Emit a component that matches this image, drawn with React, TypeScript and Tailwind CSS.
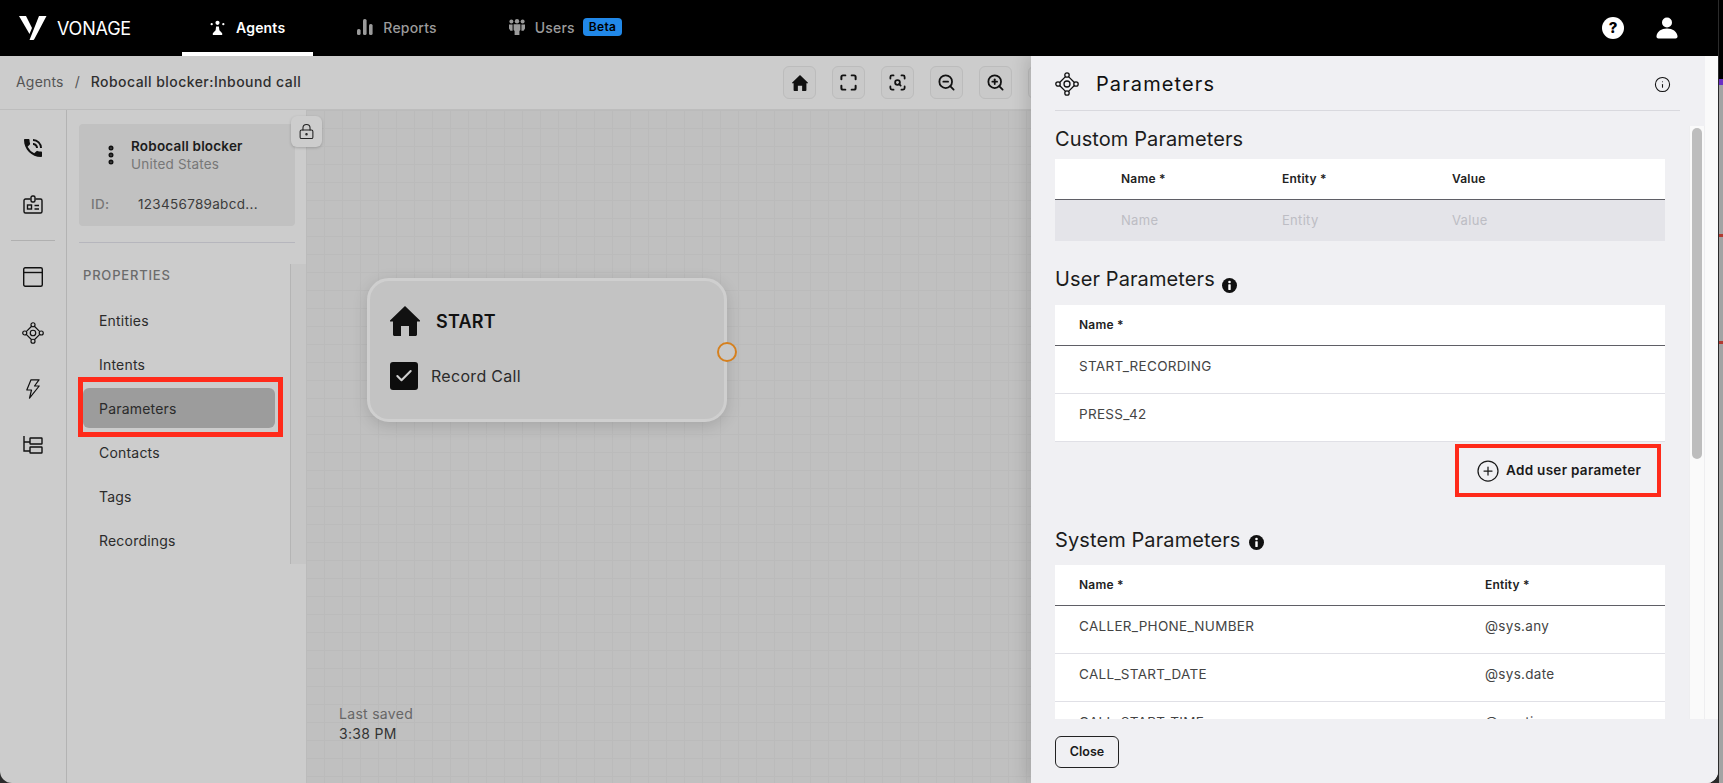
import { CirclePlus, EllipsisVertical, Info, LockKeyhole, Maximize, ScanSearch, ZoomIn, ZoomOut, Check } from 'lucide-react';
import { MdPhoneInTalk } from 'react-icons/md';

function VonageLogo() {
  return (
    <svg viewBox="0 0 28 24" className="h-6 w-7" fill="currentColor">
      <path d="M0 0h7l6 12-2.500 6z" />
      <path d="M20 0h7.500L15.500 22.800c-.4.800-.9 1.200-1.800 1.200H10.500z" />
    </svg>
  );
}

function AgentsIcon() {
  return (
    <svg viewBox="0 0 16 16" className="h-[15px] w-[15px]" fill="currentColor">
      <circle cx="1.8" cy="4.5" r="1.2" />
      <circle cx="8" cy="3" r="2.2" />
      <circle cx="14.2" cy="4.5" r="1.2" />
      <path d="M6.5 7h3l.5 4 3 3v2H3v-2l3-3z" />
    </svg>
  );
}

function ReportsIcon() {
  return (
    <svg viewBox="0 0 16 16" className="h-4 w-4" fill="currentColor">
      <rect x="0" y="10" width="3.6" height="6" rx="1.6" />
      <rect x="6" y="0" width="3.6" height="16" rx="1.6" />
      <rect x="12" y="5" width="3.6" height="11" rx="1.6" />
    </svg>
  );
}

function UsersIcon() {
  return (
    <svg viewBox="0 0 16 16" className="h-4 w-4" fill="currentColor">
      <circle cx="2.400" cy="2.600" r="2" />
      <circle cx="8" cy="2.200" r="2.200" />
      <circle cx="13.600" cy="2.600" r="2" />
      <path d="M0 5.400h3.600v6.400H1.400L0 9.400zM12.400 5.400H16v4l-1.400 2.400h-2.200zM4.600 5.200h6.800v5.800l-1 1V16H5.600v-4l-1-1z" />
    </svg>
  );
}

function PersonIcon() {
  return (
    <svg viewBox="0 0 22 22" className="h-[22px] w-[22px]" fill="currentColor">
      <circle cx="11" cy="5.5" r="5" />
      <path d="M11 11.5c5.5 0 10 3 10.5 7.5.2 1.5-.5 2.5-2 2.5h-17c-1.5 0-2.200-1-2-2.500C1 14.500 5.500 11.500 11 11.500z" />
    </svg>
  );
}

function HomeIcon({ className }: { className: string }) {
  return (
    <svg viewBox="0 0 30 30" className={className} fill="currentColor">
      <path d="M15 0 30 14.500c.3.500 0 1-.5 1H27V28.500c0 .8-.7 1.500-1.500 1.500H19V20h-8v10H4.500C3.700 30 3 29.300 3 28.500V15.500H.5c-.5 0-.8-.5-.5-1z" />
    </svg>
  );
}

function ParamsIcon({ className }: { className: string }) {
  return (
    <svg viewBox="0 0 24 24" className={className} fill="none" stroke="currentColor" strokeWidth="1.300">
      <circle cx="12" cy="12" r="3" />
      <circle cx="12" cy="3" r="2.200" />
      <circle cx="12" cy="21" r="2.200" />
      <circle cx="3" cy="12" r="2.200" />
      <circle cx="21" cy="12" r="2.200" />
      <path d="M10.500 4.600 4.600 10.500M13.500 4.600l5.900 5.900M4.600 13.500l5.900 5.900M19.400 13.500l-5.900 5.900" />
    </svg>
  );
}

function BadgeIcon() {
  return (
    <svg viewBox="0 0 20 20" className="h-5 w-5" fill="none" stroke="currentColor" strokeWidth="1.400">
      <path d="M7.500 4H2.500a1.500 1.500 0 0 0-1.500 1.500v11A1.500 1.500 0 0 0 2.500 18h15a1.500 1.500 0 0 0 1.500-1.500v-11A1.500 1.500 0 0 0 17.500 4h-5" />
      <rect x="8" y="1" width="4" height="6" rx="1.500" />
      <rect x="4.500" y="10" width="4" height="4" />
      <path d="M11.500 10.500h4.500M11.500 14h4.500" />
    </svg>
  );
}

function LayoutIcon() {
  return (
    <svg viewBox="0 0 20 20" className="h-5 w-5" fill="none" stroke="currentColor" strokeWidth="1.400">
      <rect x="0.700" y="0.700" width="18.600" height="18.600" rx="1.500" />
      <path d="M1 5.500h18" />
    </svg>
  );
}

function BoltIcon() {
  return (
    <svg viewBox="0 0 14 20" className="h-5 w-[14px]" fill="none" stroke="currentColor" strokeWidth="1.200" strokeLinejoin="round">
      <path d="M5 0.800 0.800 11H5.500L3.500 19.200 13.200 7H8.500L13 0.800z" />
    </svg>
  );
}

function TreeIcon() {
  return (
    <svg viewBox="0 0 20 20" className="h-5 w-5" fill="none" stroke="currentColor" strokeWidth="1.400">
      <path d="M1 1v15h6M1 7h6" />
      <rect x="7" y="3" width="12" height="6" rx="0.500" />
      <rect x="7" y="12" width="12" height="6" rx="0.500" />
    </svg>
  );
}

function SolidInfo() {
  return (
    <svg viewBox="0 0 16 16" className="h-[15px] w-[15px] shrink-0">
      <circle cx="8" cy="8" r="8" fill="#111" />
      <circle cx="8" cy="4.200" r="1.400" fill="#fff" />
      <rect x="6.700" y="6.700" width="2.600" height="6" rx="0.500" fill="#fff" />
    </svg>
  );
}

function TableHead({ cols, cells }: { cols: string; cells: string[] }) {
  return (
    <div className={`grid h-[41px] items-center border-b-[1.5px] border-[#5f5f66] bg-white pb-px text-[12px] font-semibold tracking-[0.2px] text-[#222] ${cols}`}>
      {cells.map((c) => (
        <div key={c}>{c}</div>
      ))}
    </div>
  );
}

function TableRow({ cols, cells }: { cols: string; cells: string[] }) {
  return (
    <div className={`grid h-12 shrink-0 border-b border-[#e0e0e6] bg-white pt-[10px] text-[13.500px] leading-5 tracking-[0.3px] text-[#444] ${cols}`}>
      {cells.map((c) => (
        <div key={c}>{c}</div>
      ))}
    </div>
  );
}

const railTop = [<MdPhoneInTalk key="phone" className="h-[24px] w-[24px]" />, <BadgeIcon key="badge" />];
const railBottom = [
  <LayoutIcon key="layout" />,
  <ParamsIcon key="params" className="h-[22px] w-[22px]" />,
  <BoltIcon key="zap" />,
  <TreeIcon key="tree" />,
];

const properties = ['Entities', 'Intents', 'Parameters', 'Contacts', 'Tags', 'Recordings'];

const toolIcons = [
  <HomeIcon key="home" className="h-4 w-4" />,
  <Maximize key="fit" className="h-[19px] w-[19px]" strokeWidth={2.500} />,
  <ScanSearch key="scan" className="h-[19px] w-[19px]" strokeWidth={2.250} />,
  <ZoomOut key="out" className="h-[19px] w-[19px]" strokeWidth={2.250} />,
  <ZoomIn key="in" className="h-[19px] w-[19px]" strokeWidth={2.250} />,
  <span key="blank" />,
];

export default function App() {
  return (
    <div className="flex h-screen w-full overflow-hidden bg-[#a3a3a3] font-[family-name:Inter,sans-serif]">
      <div className="h-full w-[1719px] shrink-0 bg-[#2b2b2b]">
        <div className="relative flex h-full w-[1718px] flex-col overflow-hidden rounded-b-[12px] bg-[#cccccc]">
          {/* Top bar */}
          <header className="flex h-14 shrink-0 items-stretch bg-black text-white">
            <div className="flex w-[182px] shrink-0 items-center gap-[10px] pl-[19px]">
              <VonageLogo />
              <span className="text-[18px] font-normal tracking-[-0.2px]">VONAGE</span>
            </div>
            <nav className="flex gap-[15px]">
              <a className="flex items-center gap-[11px] border-b-4 border-white px-[28px] pt-[2px] text-[14px] font-semibold tracking-[0.2px]">
                <AgentsIcon />
                Agents
              </a>
              <a className="flex items-center gap-[10px] px-[29px] pb-[2px] text-[14px] font-medium tracking-[0.2px] text-[#9b9b9b]">
                <ReportsIcon />
                Reports
              </a>
              <a className="-ml-px flex items-center gap-[10px] px-[29px] pb-[2px] text-[14px] font-medium tracking-[0.2px] text-[#9b9b9b]">
                <UsersIcon />
                Users
                <span className="-ml-[2px] rounded-[4px] bg-[#2188e8] px-[6px] py-px text-[12px] font-semibold leading-4 tracking-[0.3px] text-black">Beta</span>
              </a>
            </nav>
            <div className="ml-auto flex items-center gap-[32px] pr-[40px]">
              <span className="flex h-[22px] w-[22px] items-center justify-center rounded-full bg-white text-[15px] font-extrabold text-black">?</span>
              <PersonIcon />
            </div>
          </header>

          {/* Breadcrumb and toolbar */}
          <div className="flex h-[54px] shrink-0 items-center border-b border-[#bdbdbd] pl-4">
            <span className="pb-[2px] text-[14px] tracking-[0.2px] text-[#555]">Agents</span>
            <span className="mx-[11px] pb-[2px] text-[14px] text-[#555]">/</span>
            <span className="pb-[2px] text-[14px] font-medium tracking-[0.45px] text-[#2f2f2f]">Robocall blocker:Inbound call</span>
            <div className="ml-auto mr-[657px] flex gap-4">
              {toolIcons.map((icon, i) => (
                <button key={i} className="flex h-[33px] w-[33px] items-center justify-center rounded-md border border-[#bcbcbc] bg-[#c9c9c9] text-[#111]">
                  {icon}
                </button>
              ))}
            </div>
          </div>

          {/* Body */}
          <div className="flex min-h-0 flex-1">
            <aside className="flex w-[67px] shrink-0 flex-col items-center border-r border-[#b3b3b3] pt-[9px] text-[#111]">
              {railTop.map((icon) => (
                <div key={icon.key} className="flex h-[57px] items-center justify-center">
                  {icon}
                </div>
              ))}
              <div className="mb-2 mt-[7px] h-px w-[44px] shrink-0 bg-[#b0b0b0]" />
              {railBottom.map((icon) => (
                <div key={icon.key} className="flex h-[56px] items-center justify-center">
                  {icon}
                </div>
              ))}
            </aside>

            <aside className="w-[239px] shrink-0 pl-3 pt-[14px]">
              <div className="h-[102px] w-[216px] rounded-[4px] bg-[#c1c1c1] px-3 pt-[13px]">
                <div className="flex items-center pl-2">
                  <EllipsisVertical className="h-6 w-6 text-[#111]" strokeWidth={3} />
                  <div className="ml-2">
                    <div className="text-[13.500px] font-semibold leading-[18px] tracking-[0.2px] text-[#1c1c1c]">Robocall blocker</div>
                    <div className="text-[13.500px] leading-[18px] tracking-[0.2px] text-[#777]">United States</div>
                  </div>
                </div>
                <div className="mt-[22px] flex text-[13.500px] leading-[18px] tracking-[0.3px]">
                  <span className="w-[47px] font-medium text-[#777]">ID:</span>
                  <span className="text-[#3c3c3c]">123456789abcd...</span>
                </div>
              </div>
              <div className="mt-4 h-px w-[216px] bg-[#b6b6bd]" />

              <div className="mt-[21px] flex h-[300px]">
                <div className="w-[212px] border-r border-[#b5b5b5] pl-1">
                  <div className="pt-px text-[13px] font-medium leading-5 tracking-[0.8px] text-[#6b6b6b]">PROPERTIES</div>
                  <div className="mt-[15px] flex flex-col gap-1">
                    {properties.map((p) => (
                      <div
                        key={p}
                        className={`relative flex h-10 w-[192px] items-center rounded-md pl-4 text-[14px] tracking-[0.2px] text-[#2b2b2b] ${p === 'Parameters' ? 'bg-[#9c9c9c]' : ''}`}
                      >
                        {p}
                        {p === 'Parameters' && (
                          <div className="absolute -bottom-[9px] -left-[5px] -right-[8px] -top-[11px] border-[5px] border-[#ff2a1a]" />
                        )}
                      </div>
                    ))}
                  </div>
                </div>
                <div className="w-[15px] bg-[#c6c6c6]" />
              </div>
            </aside>

            {/* Canvas */}
            <main className="relative flex-1 bg-[#c0c0c0] bg-[linear-gradient(#bbbbbb_1px,transparent_1px),linear-gradient(90deg,#bbbbbb_1px,transparent_1px)] bg-[size:18px_18px]">
              <button className="absolute -left-[15px] top-[6px] z-10 flex h-[31px] w-[31px] items-center justify-center rounded-md bg-[#cdcdcd] text-[#222] shadow-[0_1px_3px_rgba(0,0,0,0.2)]">
                <LockKeyhole className="h-[17px] w-[17px]" strokeWidth={1.500} />
              </button>

              <div className="absolute left-[61px] top-[168px] h-[144px] w-[360px] rounded-[22px] border-[3px] border-[#cfcfcf] bg-[#c3c3c3] pl-[20px] pt-[25px] shadow-[0_4px_16px_rgba(0,0,0,0.14)]">
                <div className="flex items-center gap-[16px] text-[#111]">
                  <HomeIcon className="h-[30px] w-[30px]" />
                  <span className="text-[18px] font-semibold tracking-[0.2px]">START</span>
                </div>
                <div className="mt-[26px] flex items-center gap-[13px]">
                  <span className="flex h-7 w-7 items-center justify-center rounded-[3px] bg-[#0d0d0d] text-[#cfcfcf]">
                    <Check className="h-5 w-5" strokeWidth={2.500} />
                  </span>
                  <span className="text-[16px] tracking-[0.3px] text-[#2b2b2b]">Record Call</span>
                </div>
                <span className="absolute -right-[13px] top-[61px] h-5 w-5 rounded-full border-[2.500px] border-[#d5801f] bg-[#c8c8c8]" />
              </div>

              <div className="absolute left-[33px] top-[594px] text-[14px] leading-5 tracking-[0.3px]">
                <div className="text-[#666]">Last saved</div>
                <div className="text-[#333]">3:38 PM</div>
              </div>
            </main>
          </div>

          {/* Parameters drawer, over the page */}
          <section className="absolute bottom-0 left-[1031px] top-14 flex w-[687px] flex-col bg-[#f0f0f3] shadow-[-6px_0_14px_rgba(0,0,0,0.12)]">
            <div className="flex min-h-0 flex-1">
              <div className="flex w-[674px] flex-col">
                <div className="h-[70px] shrink-0 pl-6 pr-[25px]">
                  <div className="flex h-[55px] items-center border-b border-[#d9d9de] pt-[2px] text-[#111]">
                    <ParamsIcon className="h-6 w-6" />
                    <h2 className="ml-[17px] text-[20px] font-normal tracking-[1.1px]">Parameters</h2>
                    <Info className="ml-auto mr-[9px] h-[17px] w-[17px]" strokeWidth={1.500} />
                  </div>
                </div>
                <div className="flex min-h-0 flex-1">
                  <div className="min-w-0 flex-1 overflow-hidden pl-6 pr-[24px] pt-px">
                    <h3 className="text-[20px] leading-6 tracking-[0.1px] text-[#1c1c1c]">Custom Parameters</h3>
                    <div className="mt-[8px]">
                      <TableHead cols="grid-cols-[161px_170px_1fr] pl-[66px]" cells={['Name *', 'Entity *', 'Value']} />
                      <div className="grid h-[41px] grid-cols-[161px_170px_1fr] items-center bg-[#e4e4e9] pl-[66px] text-[13px] tracking-[0.3px] text-[#bdbdc4]">
                        <div>Name</div>
                        <div>Entity</div>
                        <div>Value</div>
                      </div>
                    </div>

                    <div className="mt-[26px] flex items-start gap-[7px]">
                      <h3 className="text-[20px] leading-6 tracking-[0.1px] text-[#1c1c1c]">User Parameters</h3>
                      <div className="mt-[11px]">
                        <SolidInfo />
                      </div>
                    </div>
                    <div className="mt-[12px]">
                      <TableHead cols="grid-cols-1 pl-[24px]" cells={['Name *']} />
                      <TableRow cols="grid-cols-1 pl-[24px]" cells={['START_RECORDING']} />
                      <TableRow cols="grid-cols-1 pl-[24px]" cells={['PRESS_42']} />
                    </div>
                    <div className="mt-[2px] flex justify-end pr-1">
                      <button className="flex h-[53px] w-[206px] items-center border-[4px] border-[#ff2a1a] pl-[17px] text-[13.500px] font-semibold tracking-[0.3px] text-[#1a1a1a]">
                        <CirclePlus className="mr-[6px] h-6 w-6" strokeWidth={1.250} />
                        Add user parameter
                      </button>
                    </div>

                    <div className="mt-[31px] flex items-start gap-[8px]">
                      <h3 className="text-[20px] leading-6 tracking-[0.1px] text-[#1c1c1c]">System Parameters</h3>
                      <div className="mt-[7px]">
                        <SolidInfo />
                      </div>
                    </div>
                    <div className="mt-[13px]">
                      <TableHead cols="grid-cols-[406px_1fr] pl-[24px]" cells={['Name *', 'Entity *']} />
                      <TableRow cols="grid-cols-[406px_1fr] pl-[24px]" cells={['CALLER_PHONE_NUMBER', '@sys.any']} />
                      <TableRow cols="grid-cols-[406px_1fr] pl-[24px]" cells={['CALL_START_DATE', '@sys.date']} />
                      <TableRow cols="grid-cols-[406px_1fr] pl-[24px]" cells={['CALL_START_TIME', '@sys.time']} />
                    </div>
                  </div>
                  <div className="w-4 shrink-0 border-x border-[#eeeef0] bg-[#fafafa] px-[2px] pt-[2px]">
                    <div className="h-[331px] rounded-full bg-[#bdbdbd]" />
                  </div>
                </div>
              </div>
              <div className="w-[13px] shrink-0 bg-[#fafafa]" />
            </div>
            <footer className="flex h-16 shrink-0 items-start bg-[#f0f0f3] pl-6 pt-[17px]">
              <button className="h-8 w-[64px] rounded-md border border-[#222] text-[12.500px] font-semibold text-[#1a1a1a]">Close</button>
            </footer>
          </section>
        </div>
      </div>

      {/* Sliver of what is behind the window */}
      <div className="flex-1">
        <div className="h-[79px] bg-black" />
        <div className="h-[6px] bg-[#6a2fc4]" />
        <div className="mt-[149px] h-[3px] bg-[#b03a30]" />
        <div className="mt-[104px] h-[3px] bg-[#b03a30]" />
      </div>
    </div>
  );
}
